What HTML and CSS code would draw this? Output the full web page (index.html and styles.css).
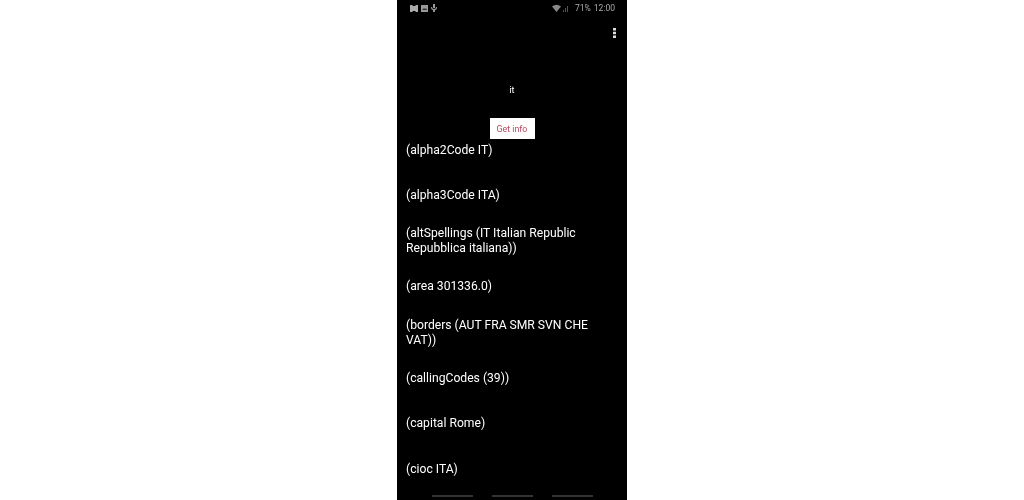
FILE: index.html
```html
<!DOCTYPE html>
<html>
  <head>
    <meta http-equiv="content-type" content="text/html; charset=UTF-8">
    <meta name="viewport" content="width=device-width, initial-scale=1">
    <link rel="stylesheet" href="styles.css">
  </head>
  <body>
    <div class="telefono">
      <div class="barraestado">
        <div class="iconos">
          <svg width="8" height="7" viewBox="0 0 8 7"><path d="M0 0h2l1 1h2l1-1h2v7H6L5 6H3L2 7H0z" fill="#aaa"/></svg>
          <svg width="7" height="7" viewBox="0 0 7 7"><path d="M0 0h7v7H0z" fill="#999"/><path d="M1 5l2-2 1 1 1-1 1 2z" fill="#333"/></svg>
          <svg width="6" height="8" viewBox="0 0 6 8"><path d="M2 0h2v4H2zM0 3h1q0 2 2 2t2-2h1q0 3-2 3v2H2V6Q0 6 0 3z" fill="#999"/></svg>
        </div>
        <div class="iconos">
          <svg width="17" height="8" viewBox="0 0 17 8">
            <path d="M0 2.500Q4.500-1 9 2.500L4.500 8z" fill="#888"/>
            <path d="M11 6h1v2h-1zM13 4h1v4h-1zM15 2h1v6h-1z" fill="#555"/>
          </svg>
          <span class="porcentaje">71%</span>
          <span class="hora">12:00</span>
        </div>
      </div>
      <div class="barraacciones">
        <svg width="3" height="10" viewBox="0 0 3 10"><path d="M0 0h3v2.400H0zM0 3.800h3v2.400H0zM0 7.600h3V10H0z" fill="#ddd"/></svg>
      </div>
      <div class="codigo">it</div>
      <div class="centrar"><button class="boton">Get info</button></div>
      <div class="lista">
        <div class="fila">(alpha2Code IT)</div>
        <div class="fila">(alpha3Code ITA)</div>
        <div class="fila">(altSpellings (IT Italian Republic Repubblica italiana))</div>
        <div class="fila">(area 301336.0)</div>
        <div class="fila">(borders (AUT FRA SMR SVN CHE VAT))</div>
        <div class="fila">(callingCodes (39))</div>
        <div class="fila">(capital Rome)</div>
        <div class="fila">(cioc ITA)</div>
      </div>
      <div class="barranav">
        <div class="rayita"></div>
        <div class="rayita"></div>
        <div class="rayita"></div>
      </div>
    </div>
  </body>
</html>
```
FILE: styles.css
```css
html{background-color: white;}
body{margin: 0;}
.telefono{
  position: relative;
  width: 230px;
  height: 500px;
  margin: 0 auto;
  overflow: hidden;
  background-color: black;
  color: white;
  font-family: Roboto, sans-serif;
  filter: blur(0.3px); /*la captura original viene borrosa*/
}
.barraestado{
  display: flex;
  justify-content: space-between;
  align-items: center;
  height: 16px;
  padding: 0 12px 0 13px;
  color: #aaa;
  font-size: 8.500px;
}
.iconos{
  display: flex;
  align-items: center;
  gap: 3px;
}
.porcentaje{margin-left: 3px;}
.hora{margin-left: 0;}
.barraacciones{
  display: flex;
  justify-content: flex-end;
  align-items: center;
  height: 33px;
  padding-right: 11px;
}
.codigo{
  margin-top: 35px;
  height: 13px;
  line-height: 13px;
  font-size: 9px;
  text-align: center;
}
.centrar{
  display: flex;
  justify-content: center;
  margin-top: 21px;
}
.boton{
  width: 45px;
  height: 21px;
  padding: 0;
  border: none;
  background-color: white;
  color: #b5475d;
  font-family: Roboto, sans-serif;
  font-size: 8.800px;
}
.lista{
  padding: 0 9px;
  margin-top: -11.500px;
}
.fila{
  display: flex;
  align-items: center;
  box-sizing: border-box;
  min-height: 45.400px;
  padding: 8px 0;
  font-size: 12.150px;
  line-height: 15px;
}
.barranav{
  position: absolute;
  left: 35px;
  bottom: 3px;
  display: flex;
  gap: 19px;
}
.rayita{
  width: 41px;
  height: 2px;
  background-color: #333;
}
```
